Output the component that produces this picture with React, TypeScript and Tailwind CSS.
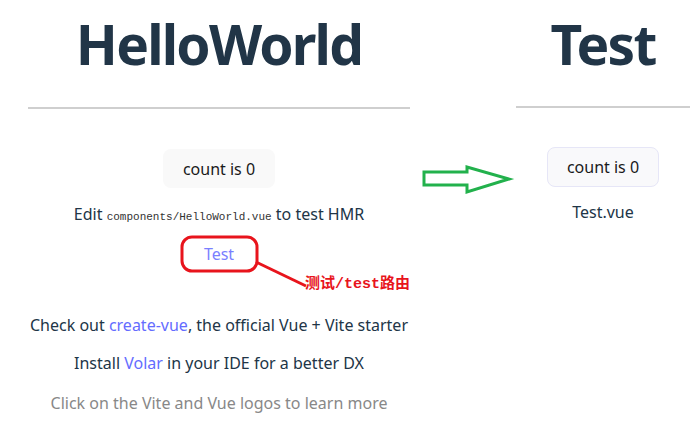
import React from 'react';

const font = "font-['Noto_Sans',sans-serif]";

const App: React.FC = () => {
  return (
    <div className={`relative w-[700px] h-[425px] overflow-hidden bg-white text-[#213547] ${font}`}>
      <div className="flex w-full">
        {/* HelloWorld page */}
        <div className="w-[438px] flex flex-col items-center">
          <h1 className="mt-[6px] text-[55px] leading-[75px] font-bold tracking-[-1.8px]">HelloWorld</h1>
          <div className="mt-[26px] w-[382px] h-[2px] bg-[#cfcfcf]"></div>
          <button className="mt-[40px] w-[112px] h-[39px] rounded-lg bg-[#f9f9f9] text-[16px] text-[#1a1a1a]">
            count is 0
          </button>
          <p className="mt-[14px] text-[16px] leading-[24px]">
            Edit <code className="font-['Liberation_Mono',monospace] text-[11px] text-[#333]">components/HelloWorld.vue</code> to test HMR
          </p>
          <a href="#" className="mt-[13px] text-[16px] leading-[24px] text-[#7a7fff]">Test</a>
          <p className="mt-[47px] text-[16px] leading-[24px]">
            Check out <a href="#" className="text-[#646cff]">create-vue</a>, the official Vue + Vite starter
          </p>
          <p className="mt-[14px] text-[16px] leading-[24px]">
            Install <a href="#" className="text-[#646cff]">Volar</a> in your IDE for a better DX
          </p>
          <p className="mt-[16px] text-[16px] leading-[24px] text-[#888]">
            Click on the Vite and Vue logos to learn more
          </p>
        </div>

        {/* /test page */}
        <div className="ml-[70px] w-[190px] flex flex-col items-center">
          <h1 className="mt-[6px] text-[55px] leading-[75px] font-bold tracking-[-1.8px]">Test</h1>
          <div className="mt-[25px] w-[174px] h-[2px] bg-[#cfcfcf]"></div>
          <button className="mt-[39px] w-[112px] h-[40px] rounded-lg border border-[#e6e6f7] bg-[#f9f9fb] text-[16px] text-[#1a1a1a]">
            count is 0
          </button>
          <p className="mt-[13px] text-[16px] leading-[24px]">Test.vue</p>
        </div>
      </div>

      {/* annotations */}
      <svg className="absolute left-0 top-0 pointer-events-none" width="700" height="425" viewBox="0 0 700 425">
        <rect x="182" y="237" width="75" height="34" rx="10" fill="none" stroke="#e8141c" strokeWidth="3" />
        <line x1="256" y1="262" x2="306" y2="286" stroke="#e8141c" strokeWidth="3" />
        <polygon
          points="424,172 467,172 467,167 509,179 467,192 467,185 424,185"
          fill="white"
          stroke="#22b14c"
          strokeWidth="3"
          strokeLinejoin="miter"
        />
      </svg>
      <span className="absolute left-[305px] top-[275px] text-[15px] leading-[20px] font-bold text-[#e8141c] font-['Liberation_Mono','Noto_Sans_CJK_SC',monospace]">
        测试/test路由
      </span>
    </div>
  );
};

export default App;
